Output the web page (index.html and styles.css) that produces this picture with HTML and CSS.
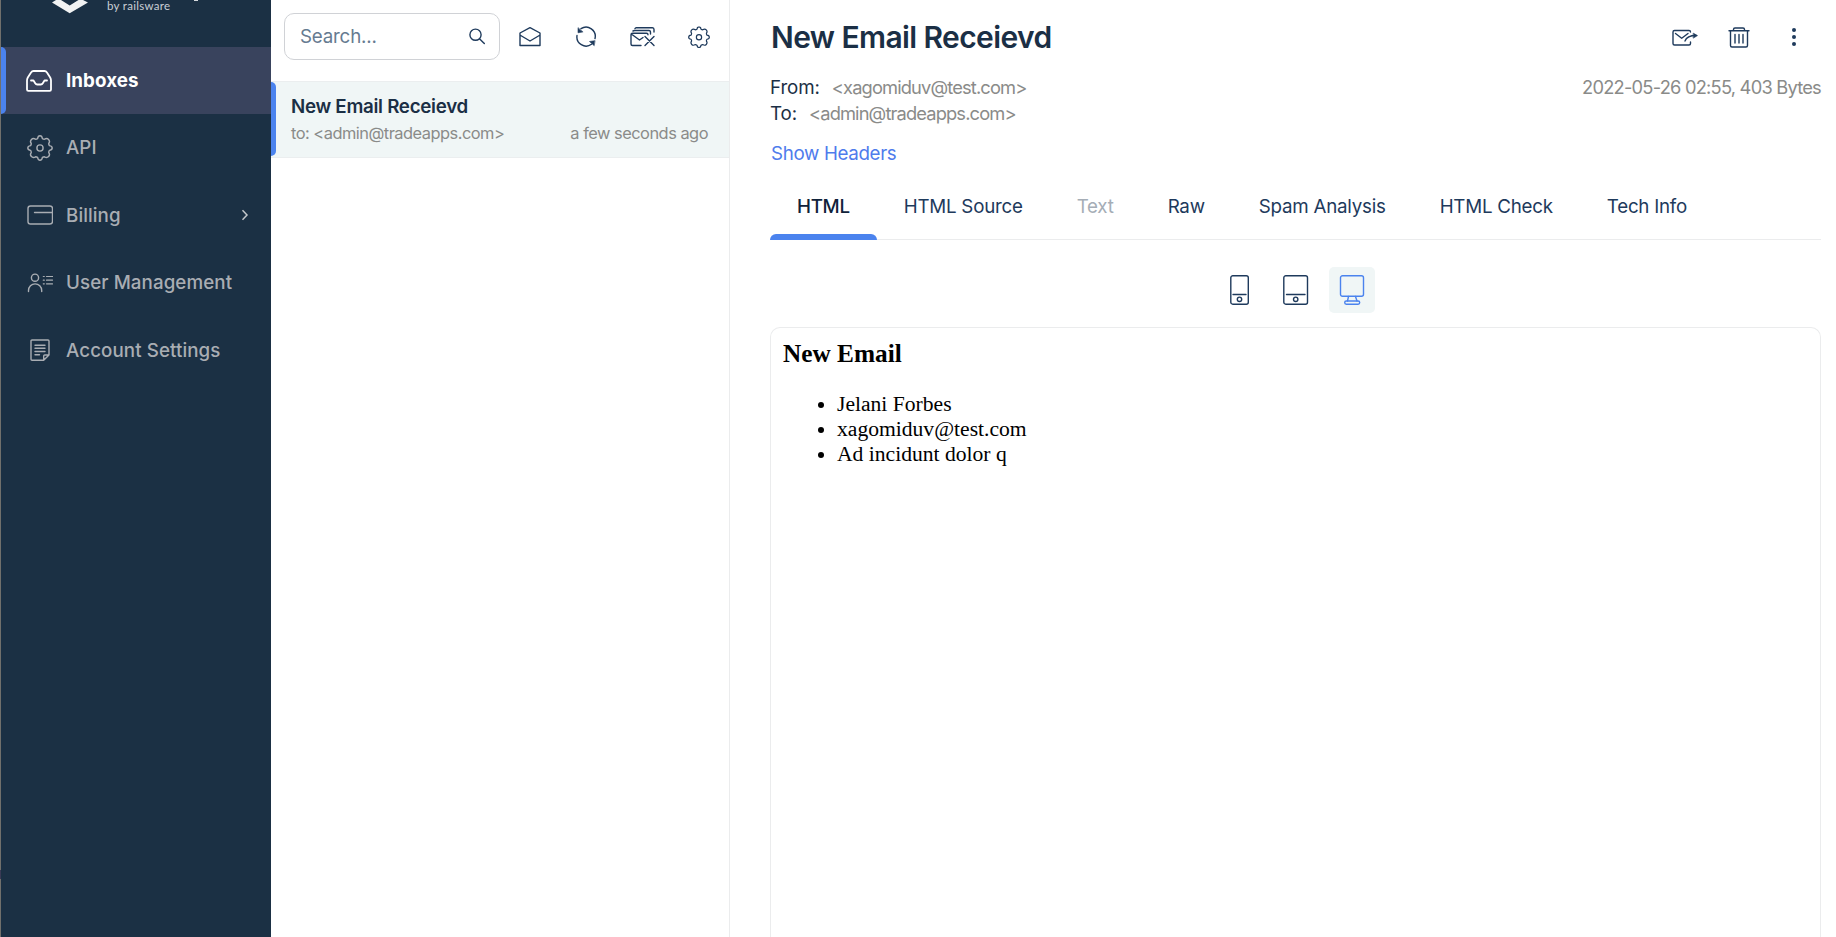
FILE: index.html
```
<!DOCTYPE html>
<html lang="en">
<head>
<meta charset="utf-8">
<title>Inboxes</title>
<link rel="stylesheet" href="styles.css">
</head>
<body>
<svg class="defs" aria-hidden="true">
  <symbol id="gear" viewBox="0 0 26 26">
    <path d="M10.600 3.600Q11 .8 13 .8Q15 .8 15.400 3.600Q16.400 4.200 17.400 4.300Q19.800 2.600 21.600 4.400Q23.400 6.200 21.700 8.600Q21.800 9.600 22.400 10.600Q25.200 11 25.200 13Q25.200 15 22.400 15.400Q21.800 16.400 21.700 17.400Q23.400 19.800 21.600 21.600Q19.800 23.400 17.400 21.700Q16.400 21.800 15.400 22.400Q15 25.200 13 25.200Q11 25.200 10.600 22.400Q9.600 21.800 8.600 21.700Q6.200 23.400 4.400 21.600Q2.600 19.800 4.300 17.400Q4.200 16.400 3.600 15.400Q.8 15 .8 13Q.8 11 3.600 10.600Q4.200 9.600 4.300 8.600Q2.600 6.200 4.400 4.400Q6.200 2.600 8.600 4.300Q9.600 4.200 10.600 3.600Z"/>
    <circle cx="13" cy="13" r="3.100"/>
  </symbol>
</svg>
<div class="app">
  <aside class="sidebar">
    <div class="brand">
      <svg class="brand-mark" width="36" height="14" viewBox="0 0 36 14"><path d="M0 2.500 4 0H9L17.700 5.500 26.500 0H31L36 2.500 17.700 13.300Z"/></svg>
      <span class="brand-by">by railsware</span>
      <span class="brand-tail"></span>
    </div>
    <nav class="nav">
      <a class="nav-item active">
        <svg class="icon" width="28" height="28" viewBox="0 0 28 28"><path class="bold" d="M2 22.500V13.500Q2 12 2.800 10.500L6.200 5.300Q7 4 8.500 4H19.500Q21 4 21.800 5.300L25.200 10.500Q26 12 26 13.500V22.500Q26 23.800 24.700 23.800H3.300Q2 23.800 2 22.500ZM6 13.500H8.500L10.200 16.300Q10.900 17.500 12.200 17.500H15.800Q17.100 17.500 17.800 16.300L19.500 13.500H22"/></svg>
        <span class="nav-label">Inboxes</span>
      </a>
      <a class="nav-item">
        <svg class="icon" width="28" height="28" viewBox="0 0 28 28"><use href="#gear" x="2" y="1" width="26" height="26"/></svg>
        <span class="nav-label">API</span>
      </a>
      <a class="nav-item">
        <svg class="icon" width="28" height="28" viewBox="0 0 28 28"><rect x="3" y="5" width="24.500" height="18" rx="2.500"/><path d="M9.500 11.500H27.500"/></svg>
        <span class="nav-label">Billing</span>
        <svg class="nav-more" width="8" height="12" viewBox="0 0 8 12"><path d="M1.500 1.300 6 6 1.500 10.700"/></svg>
      </a>
      <a class="nav-item">
        <svg class="icon" width="28" height="28" viewBox="0 0 28 28"><circle cx="10" cy="8.700" r="3.600"/><path d="M3.500 22.500V21.500A6.600 6.600 0 0 1 16.700 21.500V22.500"/><path class="fine" d="M18.300 7.500H19.300M21.500 7.500H27.500M18.300 11.200H19.300M21.500 11.200H27.500M18.300 14.800H19.300M21.500 14.800H27.500"/></svg>
        <span class="nav-label">User Management</span>
      </a>
      <a class="nav-item">
        <svg class="icon" width="28" height="28" viewBox="0 0 28 28"><path d="M7 4H23Q24 4 24 5V19L18.700 24.200H7Q6 24.200 6 23.200V5Q6 4 7 4ZM24 19H19.700Q18.700 19 18.700 20V24.200M10 9.200H20M10 12.300H20M10 15.500H20M10 18.700H14.500"/></svg>
        <span class="nav-label">Account Settings</span>
      </a>
    </nav>
  </aside>

  <section class="list">
    <div class="toolbar">
      <div class="search">
        <span class="placeholder">Search...</span>
        <svg class="icon dark" width="16" height="17" viewBox="0 0 16 17"><circle cx="6.500" cy="6.700" r="5.600"/><path d="M10.700 11 15.300 15.600"/></svg>
      </div>
      <svg class="icon tool" width="24" height="24" viewBox="0 0 24 24"><path d="M2 8 12 2.700 22 8V20.500H2ZM2.700 10.500 12 16 21.300 10.500"/></svg>
      <svg class="icon tool" width="24" height="24" viewBox="0 0 24 24"><path d="M7 3.700A9.200 9.200 0 0 1 21 13.500M17.500 19.300A9.200 9.200 0 0 1 3 10.500"/><path class="solid" d="M4 3V7.800L8.700 7ZM20.700 15.700 15.500 16.500 20 20.500Z"/></svg>
      <svg class="icon tool stack" width="26" height="24" viewBox="0 0 26 24"><path d="M12 20.500H3.500Q2 20.500 2 19V9.700Q2 8.200 3.500 8.200H17.500Q19 8.200 19 9.700M3 9.500 10.500 15 14 12.500M4 6 5.500 5.500H20Q21.500 5.500 21.500 7.500V9M6 3.500 7 2.700H23.500Q25 2.700 25 4.500V7M16 11.500 25 20.500M25 11.500 16 20.500"/></svg>
      <svg class="icon tool" width="24" height="24" viewBox="0 0 24 24"><use href="#gear" x="1" y="1.200" width="22" height="22"/></svg>
    </div>
    <article class="mail">
      <h2 class="mail-title">New Email Receievd</h2>
      <div class="mail-meta"><span>to: &lt;admin@tradeapps.com&gt;</span><span>a few seconds ago</span></div>
    </article>
  </section>

  <main class="reader">
    <header class="head">
      <h1>New Email Receievd</h1>
      <div class="actions">
        <svg class="icon dark" width="28" height="24" viewBox="0 0 28 24"><path d="M19.500 17V18.500Q19.500 20 18 20H3.500Q2 20 2 18.500V7Q2 5.500 3.500 5.500H18Q19.500 5.500 19.500 7M4.500 8.500 10.700 13.200 17 8.500M14 16Q16 10.500 25 10.500"/><path class="solid" d="M22.500 8.300 26.500 10.600 22.500 13Z"/></svg>
        <svg class="icon dark" width="24" height="24" viewBox="0 0 24 24"><path d="M2 5.700H22M3.500 6V20.500Q3.500 22 5 22H19Q20.500 22 20.500 20.500V6M6.500 5.500V4.500Q6.500 3 8 3H16Q17.500 3 17.500 4.500V5.500M8 9.500V18M12 9.500V18M16 9.500V18"/></svg>
        <svg class="icon dots" width="6" height="24" viewBox="0 0 6 24"><circle cx="3" cy="5" r="2"/><circle cx="3" cy="12" r="2"/><circle cx="3" cy="19" r="2"/></svg>
      </div>
    </header>
    <div class="info">
      <div>
        <div class="addr"><b>From:</b><span>&lt;xagomiduv@test.com&gt;</span></div>
        <div class="addr"><b>To:</b><span>&lt;admin@tradeapps.com&gt;</span></div>
      </div>
      <span class="stamp">2022-05-26 02:55, 403 Bytes</span>
    </div>
    <a class="show">Show Headers</a>
    <nav class="tabs">
      <a class="tab current">HTML</a>
      <a class="tab">HTML Source</a>
      <a class="tab off">Text</a>
      <a class="tab">Raw</a>
      <a class="tab">Spam Analysis</a>
      <a class="tab">HTML Check</a>
      <a class="tab">Tech Info</a>
    </nav>
    <div class="devices">
      <span class="device"><svg class="icon" width="20" height="30" viewBox="0 0 20 30"><rect x=".8" y=".8" width="17.500" height="28.400" rx="2"/><path d="M3 19.500H16"/><circle cx="9.500" cy="24.300" r="2.200"/></svg></span>
      <span class="device"><svg class="icon" width="26" height="30" viewBox="0 0 26 30"><rect x=".8" y=".8" width="23.700" height="28.400" rx="2"/><path d="M3.500 19.500H22"/><circle cx="12.700" cy="24.300" r="2.200"/></svg></span>
      <span class="device on"><svg class="icon" width="26" height="30" viewBox="0 0 26 30"><rect x="1.500" y=".8" width="23" height="20.500" rx="2"/><path d="M9.500 21.500 8.500 26M16.500 21.500 18 26"/><rect x="5.700" y="26" width="15" height="3.200" rx="1.600"/></svg></span>
    </div>
    <div class="frame">
      <h3>New Email</h3>
      <ul>
        <li>Jelani Forbes</li>
        <li>xagomiduv@test.com</li>
        <li>Ad incidunt dolor q</li>
      </ul>
    </div>
  </main>
</div>
</body>
</html>
```
FILE: styles.css
```
* { box-sizing: border-box; }
body { margin: 0; background: #fff; font-family: Inter, "Liberation Sans", sans-serif; font-size: 18.750px; color: #1b2f45; }
.defs { position: absolute; width: 0; height: 0; }
.app { display: flex; height: 937px; overflow: hidden; }
svg { flex: none; }
.icon { fill: none; stroke: currentColor; stroke-width: 1.4; stroke-linejoin: round; stroke-linecap: round; }
.bold { stroke-width: 1.8; }
.fine { stroke-width: 1.2; }
.icon .solid { fill: currentColor; stroke-width: .6; }
.dark, .tool { color: #1e3a5c; }

.sidebar {
  width: 271px; flex: none; padding-left: 1px; color: #a9adb3;
  background: linear-gradient(#71706c 870px, #3a3a55 870px 879px, #71706c 879px) 0 0 / 1px 100% no-repeat #1b3044;
}
.brand { display: flex; height: 47px; padding-left: 50.500px; }
.brand-mark { fill: #f1f2f3; }
.brand-by { align-self: flex-start; margin-left: 19.500px; font: 400 11.500px/11px Lato, sans-serif; letter-spacing: .3px; color: #c9ced4; }
.brand-tail { width: 4px; height: 1px; margin-left: 24px; background: #d5d9dd; }
.nav-item { display: flex; align-items: center; height: 67.500px; padding: 0 29px 0 24px; }
.nav-item.active { height: 67px; background: #39435d; color: #fff; padding: 0; }
.nav-item.active::before { content: ""; width: 5px; height: 67px; margin-right: 19px; border-radius: 0 5px 5px 0; background: #4b83ee; }
.nav-label { margin-left: 13px; font-weight: 500; letter-spacing: .08px; }
.active .nav-label { font-weight: 700; }
.nav-more { margin-left: auto; margin-right: -6.500px; fill: none; stroke: #c3c7cb; stroke-width: 1.5; }

.list { width: 459px; flex: none; border-right: 1px solid #ebeced; }
.toolbar { display: flex; align-items: center; height: 81px; padding: 0 0 8px 13px; }
.search { display: flex; flex: none; align-items: center; justify-content: space-between; width: 216px; height: 47px; padding: 0 14px 0 15px; border: 1px solid #d0d2d6; border-radius: 10px; color: #667b91; }
.placeholder { letter-spacing: -.2px; }
.tool { margin-left: 32px; }
.search + .tool { margin-left: 18px; }
.stack { margin-left: 31px; }
.mail { position: relative; height: 77px; padding: 12px 21px 0 20px; border: solid #ebeeef; border-width: 1px 0; background: #f0f6f6; }
.mail::before { content: ""; position: absolute; left: 0; top: 0; bottom: 1px; width: 5px; border-radius: 0 5px 5px 0; background: #4b83ee; }
.mail-title { margin: 0; font-size: 18.750px; line-height: 25px; font-weight: 600; letter-spacing: -.29px; }
.mail-meta { display: flex; justify-content: space-between; margin-top: 1px; font-size: 16.400px; line-height: 26px; letter-spacing: -.5px; color: #8a8b89; }

.reader { flex: 1; padding: 0 15px 0 40px; display: flex; flex-direction: column; }
.head { display: flex; justify-content: space-between; align-items: center; height: 74px; }
h1 { margin: -1px 0 0 1px; font-size: 30px; font-weight: 600; line-height: 40px; letter-spacing: -.6px; }
.actions { display: flex; align-items: center; gap: 28px; padding-right: 24px; }
.dots { fill: #1e3a5c; stroke: none; margin-left: 12px; }
.info { display: flex; justify-content: space-between; align-items: baseline; color: #8a8b89; font-size: 18.300px; line-height: 26px; letter-spacing: -.86px; }
.addr { display: flex; align-items: baseline; gap: 12px; height: 26px; }
.addr b { font-size: 18.750px; font-weight: 400; letter-spacing: -.1px; color: #1b2f45; }
.stamp { letter-spacing: -.78px; }
.show { align-self: flex-start; margin: 14px 0 0 1px; line-height: 28px; letter-spacing: -.35px; color: #4f7cec; }
.tabs { display: flex; height: 72px; border-bottom: 1px solid #ebeced; color: #1e3a5c; }
.tab { padding: 25px 27px 0; line-height: 28px; font-weight: 400; letter-spacing: -.24px; }
.current { position: relative; color: #10223a; font-weight: 500; letter-spacing: -.3px; }
.current::after { content: ""; position: absolute; left: 0; right: 0; bottom: -1px; height: 6px; border-radius: 6px 6px 0 0; background: #4b83ee; }
.off { color: #a5adb6; }
.devices { display: flex; justify-content: center; gap: 10px; padding: 27px 0 14px; color: #1e3a5c; }
.device { display: flex; align-items: center; justify-content: center; width: 46px; height: 46px; border-radius: 5px; }
.on { background: #f0f6f6; color: #4b83ee; }
.frame { flex: 1; border: 1px solid #ebeced; border-bottom: 0; border-radius: 10px 10px 0 0; padding: 10px 12px; font-family: "Liberation Serif", serif; font-size: 21.600px; color: #000; }
.frame h3 { margin: 0; font-size: 25.300px; line-height: 30px; }
.frame ul { margin: 24px 0 0; padding-left: 54px; line-height: 25px; }
```
